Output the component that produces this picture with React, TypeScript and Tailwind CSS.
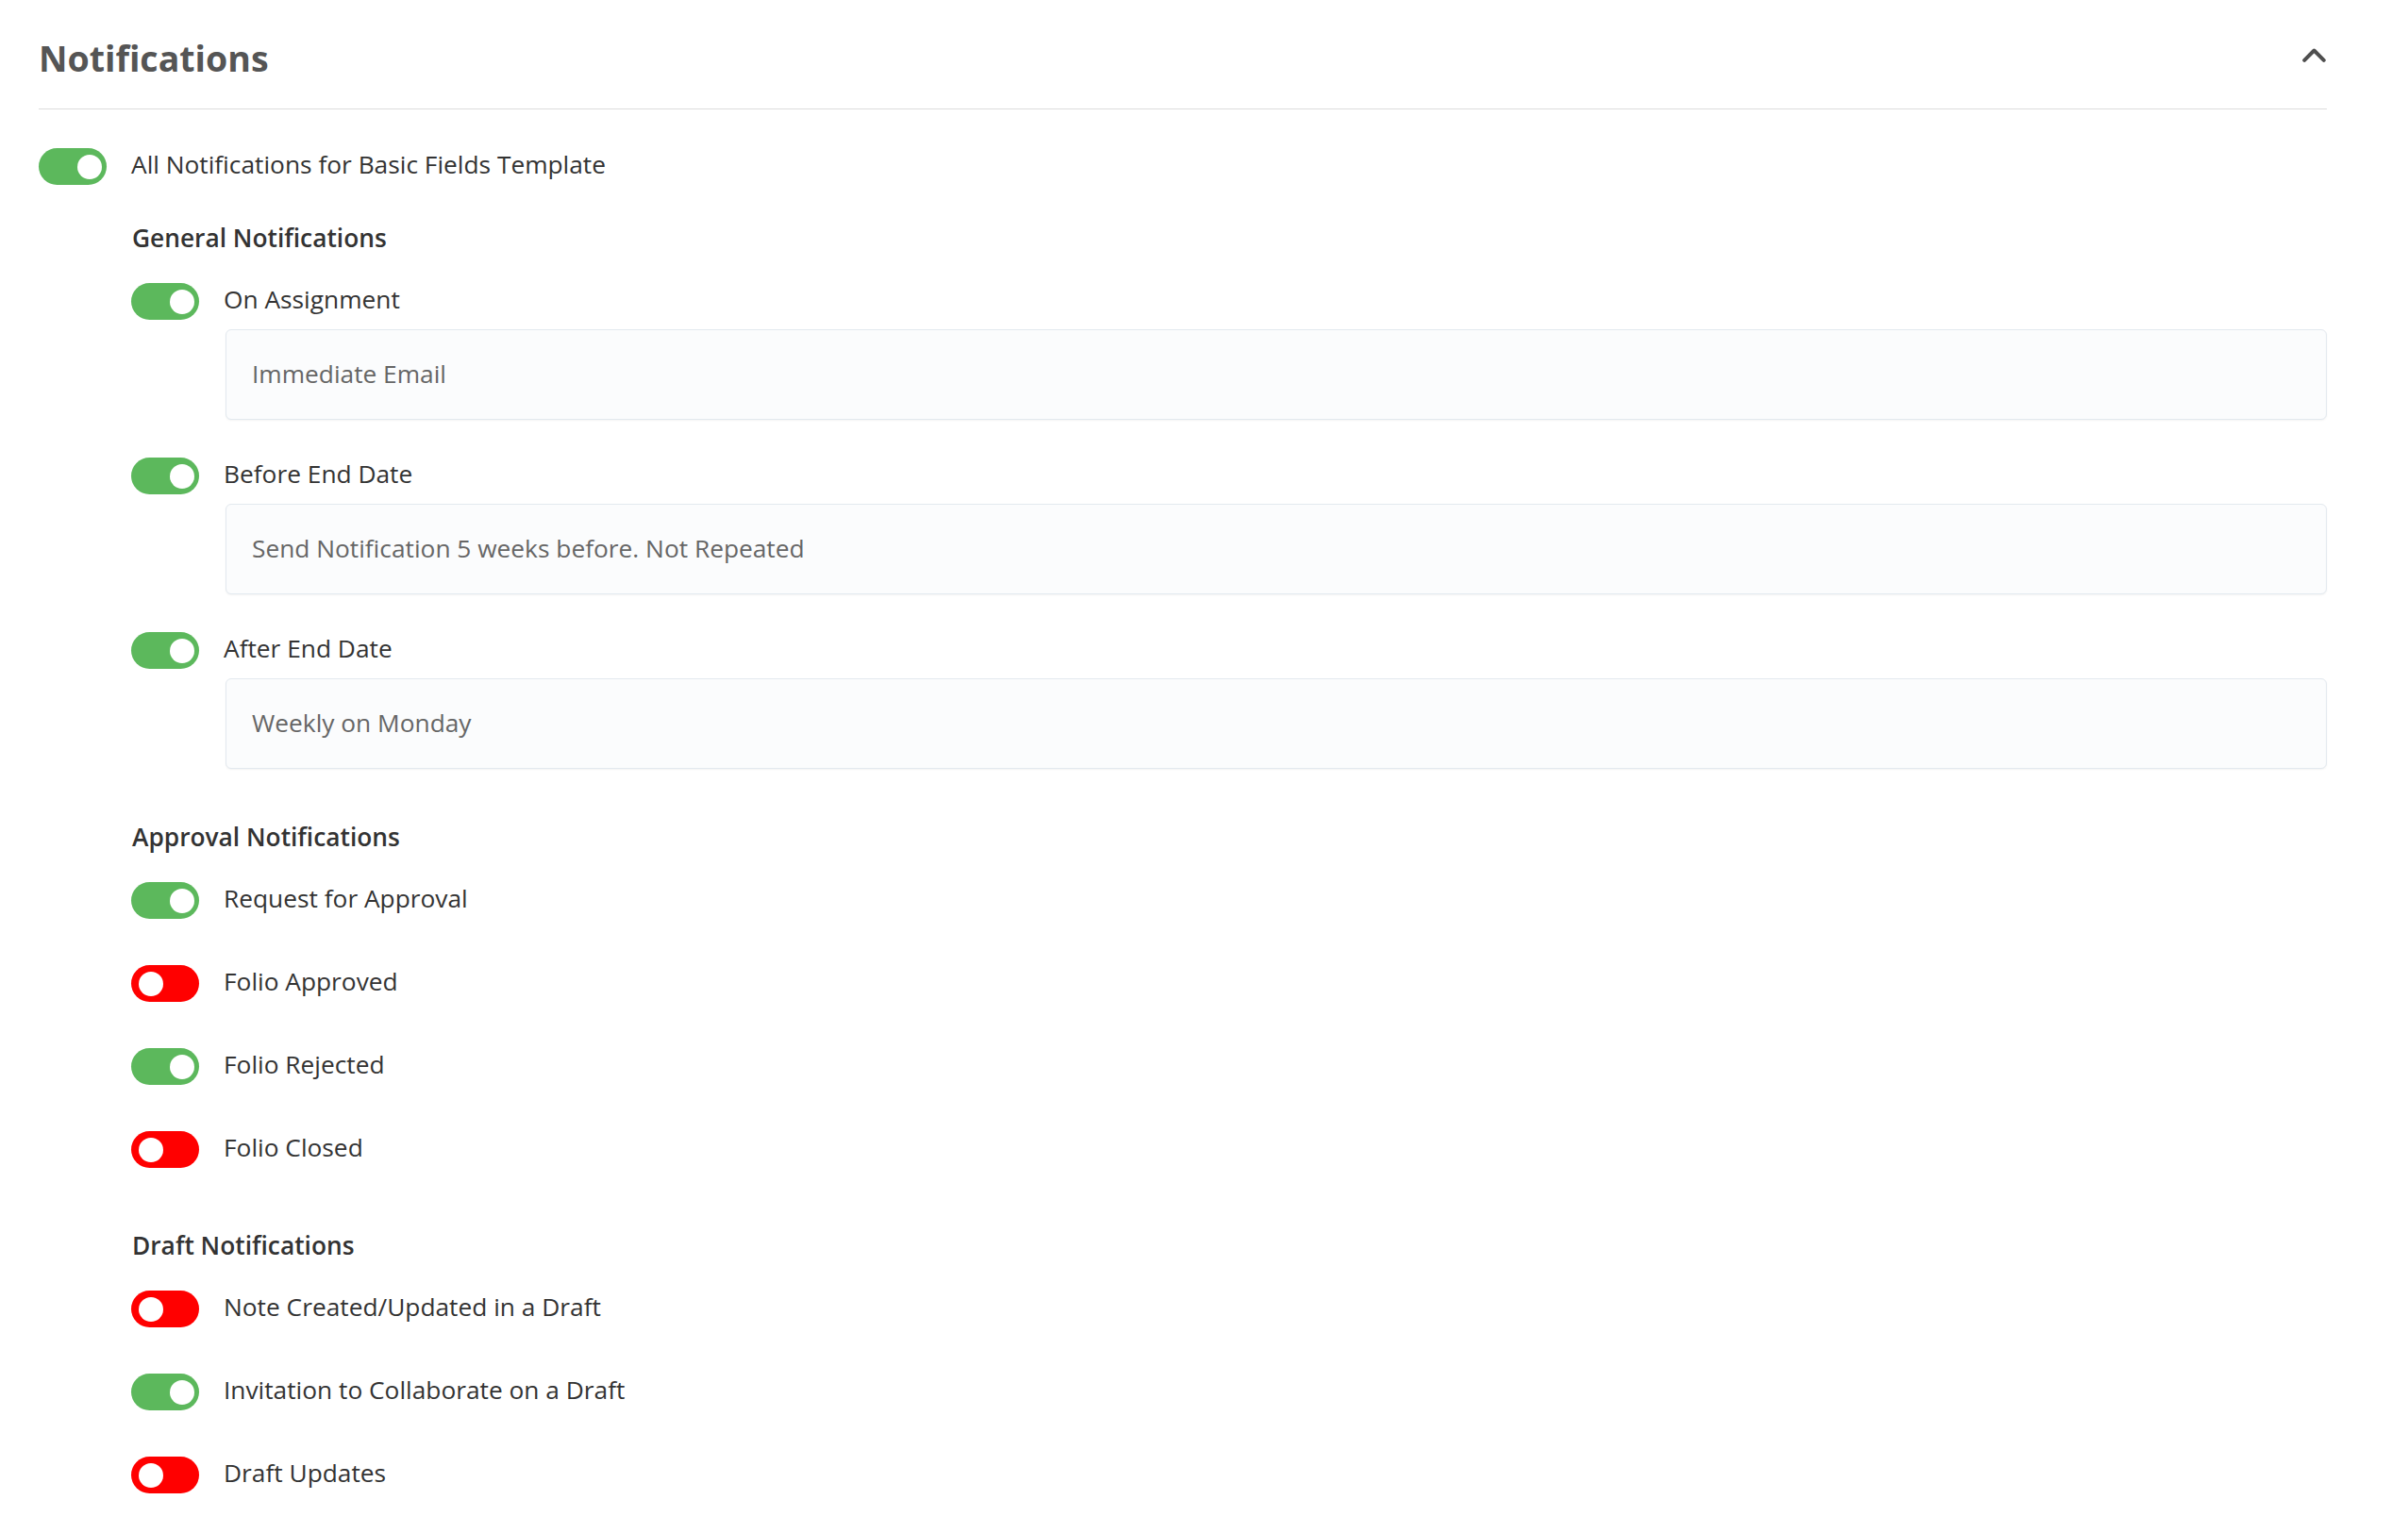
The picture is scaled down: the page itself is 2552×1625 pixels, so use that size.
import React from "react";

type Item = { label: string; on: boolean; detail?: string };

const general: Item[] = [
  { label: "On Assignment", on: true, detail: "Immediate Email" },
  { label: "Before End Date", on: true, detail: "Send Notification 5 weeks before. Not Repeated" },
  { label: "After End Date", on: true, detail: "Weekly on Monday" },
];

const approval: Item[] = [
  { label: "Request for Approval", on: true },
  { label: "Folio Approved", on: false },
  { label: "Folio Rejected", on: true },
  { label: "Folio Closed", on: false },
];

const draft: Item[] = [
  { label: "Note Created/Updated in a Draft", on: false },
  { label: "Invitation to Collaborate on a Draft", on: true },
  { label: "Draft Updates", on: false },
];

function Toggle({ on }: { on: boolean }) {
  return (
    <div
      className={`flex items-center w-[72px] h-[39px] rounded-full shrink-0 ${
        on ? "bg-[#5cb85c] justify-end pr-[5px]" : "bg-[#ff0000] justify-start pl-[8px]"
      }`}
    >
      <div className="w-[26px] h-[26px] rounded-full bg-white" />
    </div>
  );
}

function ToggleRow({ item }: { item: Item }) {
  return (
    <div className="flex items-center gap-[26px] h-[39px]">
      <Toggle on={item.on} />
      <span className="text-[26.3px] leading-[29px] text-[#333] mb-[5px]">{item.label}</span>
    </div>
  );
}

function SectionTitle({ children, className = "" }: { children: React.ReactNode; className?: string }) {
  return (
    <h3 className={`text-[26.3px] leading-[36px] font-semibold text-[#333] pl-px ${className}`}>{children}</h3>
  );
}

export default function App() {
  return (
    <div
      className="min-h-[1625px] bg-white pl-[41px] pr-[86px]"
      style={{ fontFamily: '"Open Sans", "Noto Sans", sans-serif' }}
    >
      <div className="flex justify-between items-start pt-[38px] pb-[30px] border-b border-[#dcdcdc]">
        <h2 className="text-[37.5px] leading-[47px] font-bold text-[#555]">Notifications</h2>
        <svg width="25" height="15" viewBox="0 0 25 15" className="mt-[13px] mr-[1px]" fill="none">
          <polyline
            points="2.2,12.8 12.5,2.5 22.8,12.8"
            stroke="#4f4f4f"
            strokeWidth="4"
            strokeLinecap="round"
            strokeLinejoin="round"
          />
        </svg>
      </div>

      <div className="mt-[41px]">
        <ToggleRow item={{ label: "All Notifications for Basic Fields Template", on: true }} />
      </div>

      <div className="pl-[98px]">
        <SectionTitle className="mt-[38px]">General Notifications</SectionTitle>
        <div className="mt-[30px] flex flex-col gap-[40px]">
          {general.map((g) => (
            <div key={g.label}>
              <ToggleRow item={g} />
              <div className="ml-[100px] mt-[10px] h-[96px] flex items-center pl-[27px] rounded-[6px] border border-[#e3e9ef] bg-[#fbfcfd] shadow-[0_1px_2px_rgba(0,0,0,0.05)]">
                <span className="text-[26.3px] text-[#666]">{g.detail}</span>
              </div>
            </div>
          ))}
        </div>

        <SectionTitle className="mt-[54px]">Approval Notifications</SectionTitle>
        <div className="mt-[30px] flex flex-col gap-[49px]">
          {approval.map((a) => (
            <ToggleRow key={a.label} item={a} />
          ))}
        </div>

        <SectionTitle className="mt-[64px]">Draft Notifications</SectionTitle>
        <div className="mt-[30px] flex flex-col gap-[49px]">
          {draft.map((d) => (
            <ToggleRow key={d.label} item={d} />
          ))}
        </div>
      </div>
    </div>
  );
}
